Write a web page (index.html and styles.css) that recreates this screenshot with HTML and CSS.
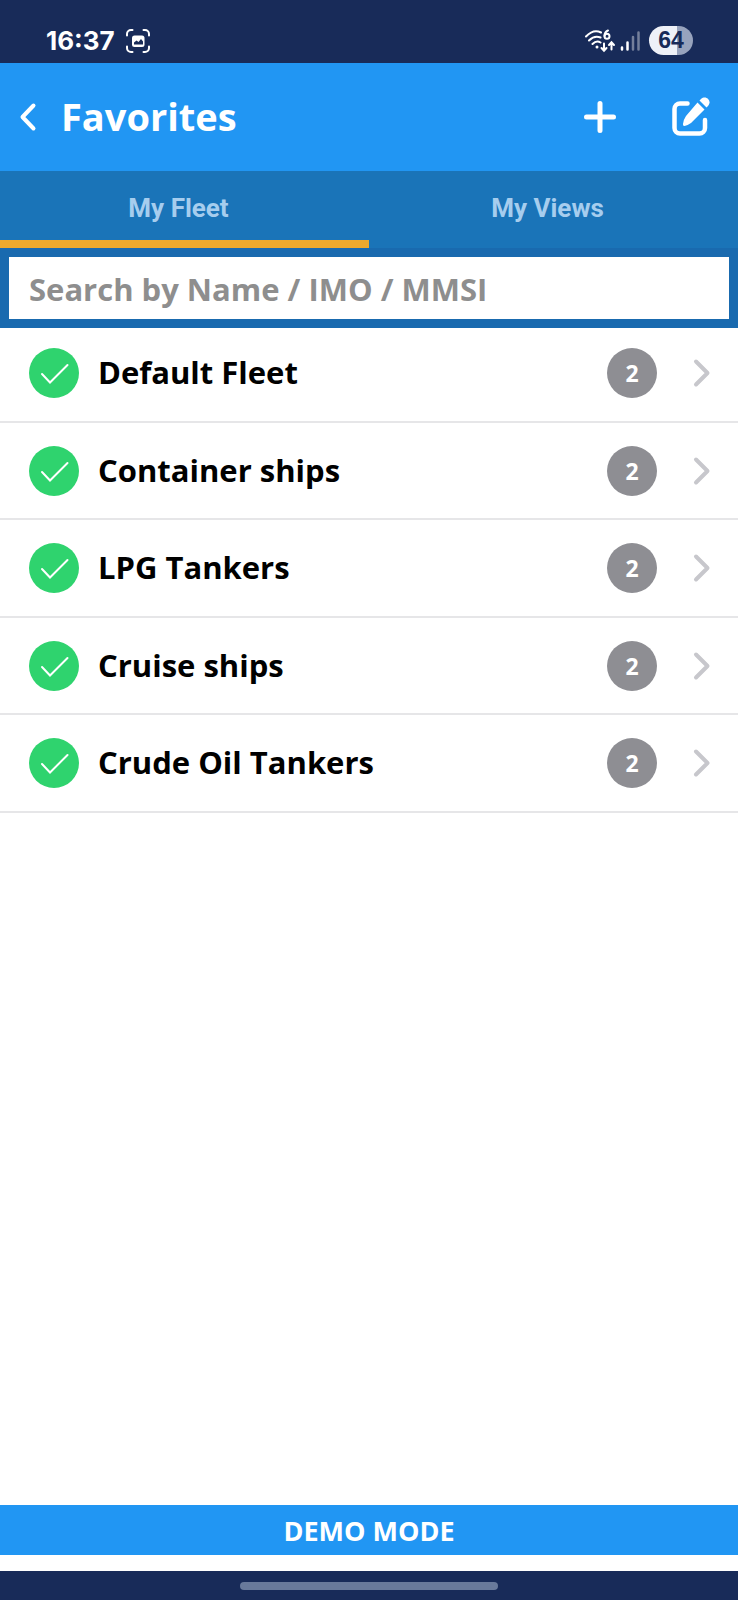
FILE: index.html
```html
<!DOCTYPE html>
<html lang="en">
<head>
<meta charset="utf-8">
<meta name="viewport" content="width=device-width, initial-scale=1">
<title>Favorites</title>
<link rel="stylesheet" href="styles.css">
</head>
<body>
<svg class="symbols" aria-hidden="true">
  <symbol id="tick" viewBox="0 0 50 50"><path d="M13 26l8 8.500 17.500-17.500" fill="none" stroke="currentColor" stroke-width="2" stroke-linecap="round"/></symbol>
  <symbol id="chevron" viewBox="0 0 20 32"><path d="M4 4.500L15.500 16 4 27.500" fill="none" stroke="currentColor" stroke-width="4" stroke-linecap="round" stroke-linejoin="round"/></symbol>
</svg>
<div class="app">
  <div class="status">
    <span class="clock">16:37</span>
    <svg class="capture" viewBox="0 0 24 24" aria-hidden="true">
      <path d="M1 6.500V5a4 4 0 0 1 4-4h1.500M17.500 1H19a4 4 0 0 1 4 4v1.500M23 17.500V19a4 4 0 0 1-4 4h-1.500M6.500 23H5a4 4 0 0 1-4-4v-1.500" fill="none" stroke="currentColor" stroke-width="2" stroke-linecap="round"/>
      <rect x="6" y="6.500" width="12.500" height="11.500" rx="2.500" fill="currentColor"/>
      <path d="M8 15.500v-2l2.500-2 2 1.500 2.500-3 2 2.500v3z" fill="#182b59"/>
    </svg>
    <span class="spacer"></span>
    <svg class="wifi" viewBox="0 0 32 24" aria-hidden="true">
      <g fill="none" stroke="currentColor" stroke-width="2" stroke-linecap="round">
        <path d="M2 7.500Q9.500-.5 17 3.500M5 11.500q5.500-5.500 11.500-3M8.500 15q4-4 8-1.500"/>
        <path d="M24 1.500Q20.500 3 20.500 7"/>
        <circle cx="23" cy="7.300" r="2.500"/>
        <path d="M20 14.500v7m-2.500-2.500l2.500 2.700 2.500-2.700M27.500 20.500v-7m-2.500 2.500l2.500-2.700 2.500 2.700"/>
      </g>
      <circle cx="13" cy="18" r="1.500" fill="currentColor"/>
    </svg>
    <svg class="signal" viewBox="0 0 20 20" aria-hidden="true">
      <g fill="none" stroke="currentColor" stroke-width="2.500" stroke-linecap="round">
        <path d="M2 16.500v2M7.500 11.500v7"/>
        <path d="M13 6v12.500M18.500 1.500v17" opacity=".4"/>
      </g>
    </svg>
    <span class="battery">64</span>
  </div>

  <header class="header">
    <button class="icon-button back" type="button" aria-label="Back">
      <svg viewBox="0 0 18 30" width="18" height="30"><path d="M14.500 3.500L3.500 15l11 11.500" fill="none" stroke="currentColor" stroke-width="4" stroke-linecap="round" stroke-linejoin="round"/></svg>
    </button>
    <h1 class="title">Favorites</h1>
    <button class="icon-button" type="button" aria-label="Add">
      <svg viewBox="0 0 32 32" width="32" height="32"><path d="M16 2.500v27M2.500 16h27" fill="none" stroke="currentColor" stroke-width="5" stroke-linecap="round"/></svg>
    </button>
    <button class="icon-button edit" type="button" aria-label="Edit">
      <svg viewBox="0 0 40 40" width="40" height="40">
        <path d="M16.500 7.500H9a5.500 5.500 0 0 0-5.500 5.500v19a5.500 5.500 0 0 0 5.500 5.500h19.500a5.500 5.500 0 0 0 5.500-5.500V24" fill="none" stroke="currentColor" stroke-width="4.500" stroke-linecap="round"/>
        <path d="M26.500 6.500l7 7-13.500 13.500q-3.500 2.500-6.500 3-2 0-1.500-2 .5-4.500 3-8z" fill="currentColor"/>
        <path d="M28.500 4.500l1.500-1.500c5-4.500 11.500 2 7 7L35.500 11.500z" fill="currentColor"/>
      </svg>
    </button>
  </header>

  <nav class="tabs">
    <a class="tab active" href="#fleet" aria-current="page">My Fleet</a>
    <a class="tab" href="#views">My Views</a>
  </nav>

  <form class="search">
    <input class="search-input" type="search" aria-label="Search by Name / IMO / MMSI" placeholder="Search by Name / IMO / MMSI">
  </form>

  <main class="content">
    <ul class="fleets" id="fleet">
      <li class="fleet">
        <span class="check"><input type="checkbox" id="f1" checked><svg><use href="#tick"/></svg></span>
        <label class="name" for="f1">Default Fleet</label>
        <span class="count">2</span>
        <a class="open" href="#default" aria-label="Open Default Fleet"><svg><use href="#chevron"/></svg></a>
      </li>
      <li class="fleet">
        <span class="check"><input type="checkbox" id="f2" checked><svg><use href="#tick"/></svg></span>
        <label class="name" for="f2">Container ships</label>
        <span class="count">2</span>
        <a class="open" href="#container" aria-label="Open Container ships"><svg><use href="#chevron"/></svg></a>
      </li>
      <li class="fleet">
        <span class="check"><input type="checkbox" id="f3" checked><svg><use href="#tick"/></svg></span>
        <label class="name" for="f3">LPG Tankers</label>
        <span class="count">2</span>
        <a class="open" href="#lpg" aria-label="Open LPG Tankers"><svg><use href="#chevron"/></svg></a>
      </li>
      <li class="fleet">
        <span class="check"><input type="checkbox" id="f4" checked><svg><use href="#tick"/></svg></span>
        <label class="name" for="f4">Cruise ships</label>
        <span class="count">2</span>
        <a class="open" href="#cruise" aria-label="Open Cruise ships"><svg><use href="#chevron"/></svg></a>
      </li>
      <li class="fleet">
        <span class="check"><input type="checkbox" id="f5" checked><svg><use href="#tick"/></svg></span>
        <label class="name" for="f5">Crude Oil Tankers</label>
        <span class="count">2</span>
        <a class="open" href="#crude" aria-label="Open Crude Oil Tankers"><svg><use href="#chevron"/></svg></a>
      </li>
    </ul>
  </main>

  <div class="demo">DEMO MODE</div>
  <div class="system-nav"><span class="handle"></span></div>
</div>
</body>
</html>
```
FILE: styles.css
```css
* { box-sizing: border-box; }

body {
  margin: 0;
  font-family: "Open Sans", "Noto Sans", sans-serif;
  font-weight: 700;
  background: #fff;
  color: #000;
}

.symbols { display: none; }

.app {
  display: flex;
  flex-direction: column;
  min-height: 100vh;
}

.status {
  display: flex;
  align-items: center;
  height: 63px;
  padding: 18px 45px 0 46px;
  background: #182b59;
  color: #fff;
  font-family: Inter, sans-serif;
}
.clock { font-size: 26px; line-height: 32px; font-weight: 700; }
.capture { width: 24px; height: 24px; margin-left: 11px; }
.spacer { flex: 1; }
.wifi { width: 32px; height: 24px; }
.signal { width: 20px; height: 20px; margin: 0 9px 0 4px; }
.battery {
  width: 44px;
  border-radius: 15px;
  background: linear-gradient(90deg, #eef1f8 64%, #97a3bd 64%);
  color: #182b59;
  font-family: "Liberation Sans", sans-serif;
  font-size: 23px;
  line-height: 29px;
  font-weight: 700;
  text-align: center;
}

.header {
  display: flex;
  align-items: center;
  height: 108px;
  padding: 0 27px 0 19px;
  background: #2196f3;
  color: #fff;
}
.title {
  flex: 1;
  margin: 0 0 2px 24px;
  font-size: 38px;
  line-height: 52px;
  font-weight: 700;
}
.icon-button {
  display: flex;
  padding: 0;
  border: 0;
  background: none;
  color: inherit;
}
.edit { margin: 0 0 2px 55px; }

.tabs {
  display: grid;
  grid-template-columns: 1fr 1fr;
  background: #1a74b8;
}
.tab {
  height: 77px;
  padding: 20px 12px 0 0;
  border-bottom: 8px solid transparent;
  color: #a6cdee;
  font-family: Roboto, sans-serif;
  font-size: 26px;
  line-height: 34px;
  font-weight: 700;
  text-align: center;
  text-decoration: none;
}
.tab.active { border-bottom-color: #eda92d; }

.search {
  padding: 9px;
  background: #196aaf;
}
.search-input {
  display: block;
  width: 100%;
  height: 62px;
  padding: 2px 20px 0;
  border: 0;
  border-radius: 0;
  background: #fff;
  color: #000;
  font: inherit;
  font-size: 31px;
  font-weight: 700;
  appearance: none;
}
.search-input::placeholder { color: #8e8e8e; opacity: 1; }

.content { flex: 1; }
.fleets {
  margin: 0;
  padding: 0;
  list-style: none;
}
.fleet {
  display: flex;
  align-items: center;
  height: 98px;
  padding: 0 26px 0 29px;
  border-bottom: 2px solid #e6e6e8;
}
.fleet:nth-child(even) { height: 97px; }
.fleet:first-child { height: 95px; padding-bottom: 4px; }
.check {
  display: grid;
  width: 50px;
  height: 50px;
  color: #fff;
}
.check input {
  grid-area: 1 / 1;
  width: 50px;
  height: 50px;
  margin: 0;
  border-radius: 50%;
  background: #2fd36e;
  appearance: none;
}
.check svg {
  grid-area: 1 / 1;
  width: 50px;
  height: 50px;
  pointer-events: none;
}
.name {
  flex: 1;
  margin: 0 0 2px 19px;
  font-size: 31px;
  line-height: 42px;
}
.count {
  width: 50px;
  height: 50px;
  border-radius: 50%;
  background: #8e8e93;
  color: #fff;
  font-size: 23px;
  line-height: 50px;
  text-align: center;
}
.open {
  display: flex;
  margin-left: 35px;
  color: #c7c7cc;
}
.open svg { width: 20px; height: 32px; }

.demo {
  margin-bottom: 16px;
  padding-top: 2px;
  background: #2196f3;
  color: #fff;
  font-size: 27px;
  line-height: 48px;
  text-align: center;
}

.system-nav {
  display: flex;
  align-items: center;
  justify-content: center;
  height: 29px;
  background: #182b59;
}
.handle {
  width: 35%;
  height: 8px;
  border-radius: 4px;
  background: #697a9b;
}
```
